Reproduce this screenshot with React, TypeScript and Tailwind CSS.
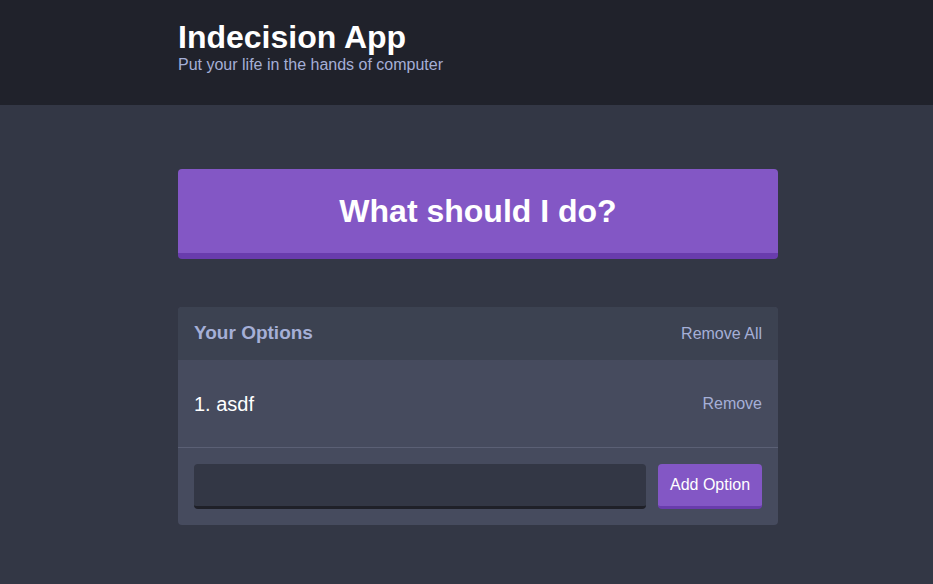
import React from "react";

export default function App() {
  return (
    <div
      className="min-h-screen bg-[#333745] text-white"
      style={{ fontFamily: '"Liberation Sans", Arial, Helvetica, sans-serif' }}
    >
      <header className="bg-[#20222b] h-[105px] pt-[19px]">
        <div className="w-[600px] ml-[178px]">
          <h1 className="text-[32px] font-bold leading-[37px] m-0">Indecision App</h1>
          <h2 className="text-[16px] leading-[18px] text-[#a5afd7] m-0 font-normal">
            Put your life in the hands of computer
          </h2>
        </div>
      </header>
      <div className="w-[600px] ml-[178px] pt-[64px]">
        <button className="w-full h-[90px] bg-[#8357c5] border-b-[6px] border-[#693cad] rounded-[4px] text-[32px] font-bold text-white leading-[37px]">
          What should I do?
        </button>
        <div className="mt-[48px] bg-[#464b5e] rounded-[4px] overflow-hidden">
          <div className="bg-[#3c4251] h-[53px] px-[16px] flex items-center justify-between">
            <h3 className="text-[19px] font-bold text-[#a5afd7] m-0">Your Options</h3>
            <button className="text-[16px] text-[#a5afd7]">Remove All</button>
          </div>
          <div className="h-[88px] px-[16px] flex items-center justify-between border-b border-[#5b6075]">
            <p className="text-[20px] text-white m-0">1. asdf</p>
            <button className="text-[16px] text-[#a5afd7]">Remove</button>
          </div>
          <form className="flex p-[16px] h-[77px]">
            <input className="flex-grow bg-[#333745] border-b-[3px] border-[#1f2028] rounded-[4px] mr-[12px] h-[45px] px-[12px] text-[#a5afd7] outline-none" />
            <button
              type="button"
              className="bg-[#8357c5] border-b-[3px] border-[#693cad] rounded-[4px] h-[45px] w-[104px] text-[16px] text-white"
            >
              Add Option
            </button>
          </form>
        </div>
      </div>
    </div>
  );
}
